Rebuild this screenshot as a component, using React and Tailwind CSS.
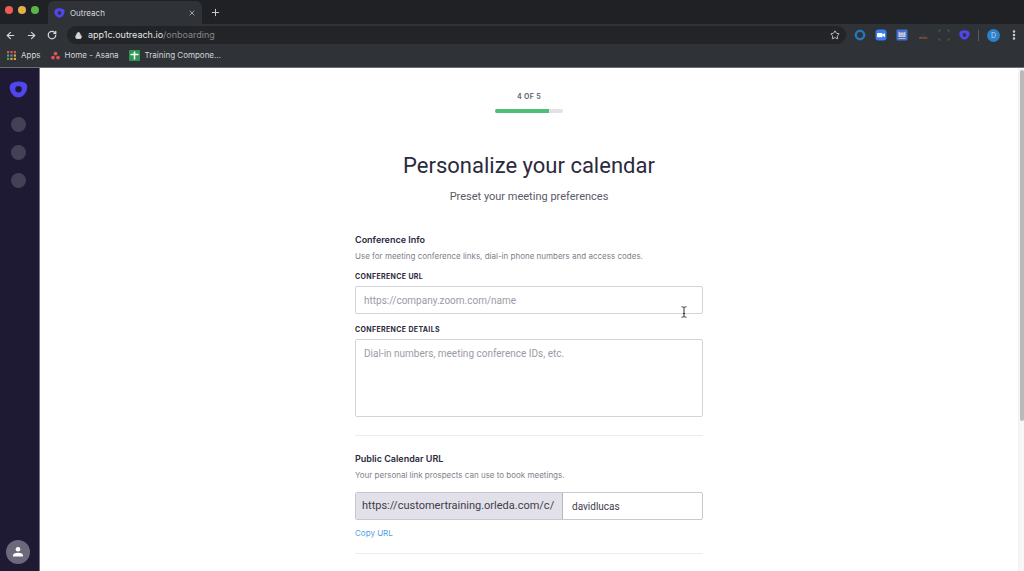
import React, { useState } from 'react'
import { ArrowLeft, ArrowRight, RotateCw, Lock, Star, X, Plus, EllipsisVertical } from 'lucide-react'

// Outreach mark: rounded blob with a round hole
const OutreachLogo = ({ className }) => (
    <svg viewBox="0 0 20 18" className={className} aria-hidden="true">
        <path
            fill="#5046f0"
            fillRule="evenodd"
            d="M5 1.300C8.500 .2 13 .4 16.200 1.500C18.800 2.400 19.600 4.800 19.200 7.300C18.700 10.600 17.200 13.200 15 15.300C12.600 17.600 8.800 17.900 5.800 16.300C3 14.700 1.300 11.300 .7 7.800C.2 4.600 1.800 2.300 5 1.300ZM10 5.400A3.400 3.400 0 1 0 10 12.200A3.400 3.400 0 1 0 10 5.400Z"
        />
    </svg>
)

const AppsIcon = () => {
    const colors = ['#d9574c', '#d9574c', '#d9574c', '#4fa765', '#4a86e0', '#d9a441', '#4fa765', '#d9a441', '#d9a441']
    return (
        <svg viewBox="0 0 9 9" className="size-[9px]" aria-hidden="true">
            {colors.map((color, i) => (
                <rect key={i} x={(i % 3) * 3.4} y={Math.floor(i / 3) * 3.4} width="2.200" height="2.200" fill={color} />
            ))}
        </svg>
    )
}

const AsanaIcon = () => (
    <svg viewBox="0 0 10 10" className="size-[9px]" fill="#e0525a" aria-hidden="true">
        <circle cx="5" cy="2.800" r="2.100" />
        <circle cx="2.200" cy="7.300" r="2.100" />
        <circle cx="7.800" cy="7.300" r="2.100" />
    </svg>
)

const SheetIcon = () => (
    <svg viewBox="0 0 11 11" className="size-[11px]" aria-hidden="true">
        <rect width="11" height="11" rx="1" fill="#2f9553" />
        <path d="M5.500 1.500V9.500M1.500 4.500H9.500" stroke="#fff" strokeWidth="1.500" />
    </svg>
)

const bookmarks = [
    { label: 'Apps', icon: AppsIcon },
    { label: 'Home - Asana', icon: AsanaIcon },
    { label: 'Training Compone…', icon: SheetIcon },
]

const extensions = [
    {
        name: 'Okta',
        art: <circle cx="6" cy="6" r="4.200" fill="none" stroke="#2577b5" strokeWidth="2.400" />,
    },
    {
        name: 'Zoom',
        art: (
            <>
                <rect x=".5" y=".5" width="11" height="11" rx="3" fill="#3b7df0" />
                <rect x="2" y="4" width="5.500" height="4.200" rx="1" fill="#fff" />
                <path d="M7.500 5.200L10 4.200V8L7.500 7Z" fill="#fff" />
            </>
        ),
    },
    {
        name: 'Reader',
        art: (
            <>
                <rect x=".5" y=".5" width="11" height="11" rx="1" fill="#3f6fd0" />
                <path d="M2.500 2.500L4 3.500H8L9.500 2.500V8H2.500Z" fill="#c9ccd6" />
                <path d="M4 5H5M7 5H8M4.500 6.700H7.500" stroke="#8d94a8" strokeWidth=".8" />
                <path d="M2.500 9.500H9.500" stroke="#c9ccd6" strokeWidth=".8" />
            </>
        ),
    },
    {
        name: 'Analytics',
        art: (
            <>
                <path d="M2 9H10.500" stroke="#8a563a" strokeWidth="1.200" />
                <path d="M3.500 8.500L5 7.500M7 8.500L8.500 7.500" stroke="#8a563a" strokeWidth=".8" />
                <path d="M5.500 5.500L7 4.500" stroke="#3b4252" strokeWidth="1" />
            </>
        ),
    },
    {
        name: 'Capture',
        art: (
            <path
                d="M1 3V1H3M9 1H11V3M11 9V11H9M3 11H1V9"
                fill="none"
                stroke="#3d6b3a"
                strokeWidth=".9"
            />
        ),
    },
]

const BrowserChrome = () => (
    <header className="flex-shrink-0 bg-[#202124] text-[#d5d7da]">
        {/* Tab strip */}
        <div className="flex h-6 items-stretch">
            <div className="flex w-12 items-center gap-[5px] pb-1 pl-[5px]">
                <span className="size-2 rounded-full bg-[#ee5c54]" />
                <span className="size-2 rounded-full bg-[#e0b04a]" />
                <span className="size-2 rounded-full bg-[#5bb548]" />
            </div>
            <div className="mt-px flex w-[154px] items-center rounded-t-md bg-[#2f3236] px-1.5">
                <OutreachLogo className="h-[10px] w-[11px]" />
                <span className="ml-[5px] flex-1 text-[8px]">Outreach</span>
                <button aria-label="Close tab"><X size={8} /></button>
            </div>
            <button aria-label="New tab" className="ml-2 self-center"><Plus size={11} /></button>
        </div>

        {/* Toolbar */}
        <div className="flex h-[22px] items-center bg-[#2f3236] pr-1">
            <div className="flex items-center gap-2.5 pr-2.5 pl-[5px]">
                <button aria-label="Back"><ArrowLeft size={11} strokeWidth={2.5} /></button>
                <button aria-label="Forward"><ArrowRight size={11} strokeWidth={2.5} /></button>
                <button aria-label="Reload"><RotateCw size={10} strokeWidth={3} /></button>
            </div>
            <div className="flex h-[18px] flex-1 items-center rounded-full bg-[#222427] pr-1.5 pl-2">
                <Lock size={7} strokeWidth={3} fill="currentColor" />
                <span className="ml-1.5 flex-1 text-[9px] text-[#e4e6e8]">
                    app1c.outreach.io<span className="text-[#85888c]">/onboarding</span>
                </span>
                <button aria-label="Bookmark this page"><Star size={10} /></button>
            </div>
            <div className="ml-2 flex items-center gap-[9px]">
                {extensions.map((ext) => (
                    <button key={ext.name} aria-label={ext.name}>
                        <svg viewBox="0 0 12 12" className="size-3">{ext.art}</svg>
                    </button>
                ))}
                <button aria-label="Outreach Everywhere"><OutreachLogo className="h-[10px] w-[11px]" /></button>
            </div>
            <span className="ml-2 h-[11px] w-px bg-[#55585c]" />
            <button className="ml-2 size-[13px] rounded-full bg-[#2d7fc8] text-[7px] leading-none text-[#b9dcf7]">D</button>
            <button aria-label="Browser menu" className="ml-2"><EllipsisVertical size={12} strokeWidth={3} /></button>
        </div>

        {/* Bookmarks */}
        <nav className="flex h-[22px] items-center gap-2.5 border-b border-[#6c6e71] bg-[#2f3236] pb-[3px] pl-[7px] text-[8px]">
            {bookmarks.map((item) => (
                <a key={item.label} href="#" className="flex items-center gap-[5px]">
                    <item.icon />
                    <span>{item.label}</span>
                </a>
            ))}
        </nav>
    </header>
)

const Sidebar = () => (
    <aside className="flex w-10 flex-shrink-0 flex-col items-center border-r border-[#77757f] bg-[#1e1a34] pt-[13px] pr-[3px] pb-[7px]">
        <a href="#" aria-label="Home"><OutreachLogo className="h-[17px] w-[19px]" /></a>
        <div className="mt-[19px] flex flex-col gap-[13px]">
            <span className="size-[15px] rounded-full bg-[#454056]" />
            <span className="size-[15px] rounded-full bg-[#454056]" />
            <span className="size-[15px] rounded-full bg-[#454056]" />
        </div>
        <button aria-label="Account" className="mt-auto flex size-6 items-center justify-center rounded-full bg-[#6d697c]">
            <svg viewBox="0 0 12 12" className="size-3" fill="#fff">
                <circle cx="6" cy="3.300" r="2.300" />
                <path d="M1 10.500V9.500C1 7.800 3 6.800 6 6.800S11 7.800 11 9.500V10.500Z" />
            </svg>
        </button>
    </aside>
)

const SectionTitle = ({ title, children }) => (
    <>
        <h2 className="text-[9px] leading-4 font-semibold text-[#2b2a3d]">{title}</h2>
        <p className="mt-0.5 text-[8px] leading-3 text-[#7f7f8b]">{children}</p>
    </>
)

const App = () => {
    const [conferenceUrl, setConferenceUrl] = useState('')
    const [details, setDetails] = useState('')
    const [slug, setSlug] = useState('davidlucas')

    return (
        <div className="flex h-dvh flex-col overflow-hidden bg-white font-[Inter,'Open_Sans',sans-serif]">
            <BrowserChrome />
            <div className="flex min-h-0 flex-1">
                <Sidebar />
                <main className="min-w-0 flex-1 overflow-hidden">
                    <div className="mx-auto w-full max-w-[348px] pt-[23px]">
                        {/* Step progress */}
                        <div className="flex flex-col items-center">
                            <p className="text-[7px] leading-3 font-bold tracking-wider text-[#6c6b79]">4 OF 5</p>
                            <div className="mt-1.5 h-1 w-[68px] overflow-hidden rounded-full bg-[#e2e1e8]">
                                <div className="h-full w-4/5 bg-[#4fbf78]" />
                            </div>
                        </div>

                        <h1 className="mt-[37px] text-center font-[Roboto,sans-serif] text-[22px] leading-8 text-[#2b2a3d]">
                            Personalize your calendar
                        </h1>
                        <p className="mt-[7px] text-center font-[Roboto,sans-serif] text-[11px] leading-4 text-[#5a5968]">
                            Preset your meeting preferences
                        </p>

                        <section className="mt-[27px]">
                            <SectionTitle title="Conference Info">
                                Use for meeting conference links, dial-in phone numbers and access codes.
                            </SectionTitle>
                            <label htmlFor="conference-url" className="mt-[9px] block text-[7px] leading-3 font-bold tracking-wider text-[#2b2a3d]">
                                CONFERENCE URL
                            </label>
                            <input
                                id="conference-url"
                                type="text"
                                value={conferenceUrl}
                                onChange={(e) => setConferenceUrl(e.target.value)}
                                placeholder="https://company.zoom.com/name"
                                className="mt-[3px] block h-7 w-full rounded-xs border border-[#d3d3da] px-2 font-[Roboto,sans-serif] text-[10px] text-[#3d3c4c] placeholder:text-[#9b9ba6]"
                            />
                            <label htmlFor="conference-details" className="mt-2.5 block text-[7px] leading-3 font-bold tracking-wider text-[#2b2a3d]">
                                CONFERENCE DETAILS
                            </label>
                            <textarea
                                id="conference-details"
                                value={details}
                                onChange={(e) => setDetails(e.target.value)}
                                placeholder="Dial-in numbers, meeting conference IDs, etc."
                                className="mt-[3px] block h-[78px] w-full resize-none rounded-xs border border-[#d3d3da] px-2 py-1.5 font-[Roboto,sans-serif] text-[10px] leading-4 text-[#3d3c4c] placeholder:text-[#9b9ba6]"
                            />
                        </section>

                        <hr className="mt-[18px] border-[#ececef]" />

                        <section className="mt-[15px]">
                            <SectionTitle title="Public Calendar URL">
                                Your personal link prospects can use to book meetings.
                            </SectionTitle>
                            <div className="mt-[11px] flex h-7 rounded-xs border border-[#c9c8d2] font-[Roboto,sans-serif] text-[#3d3c4c]">
                                <label
                                    htmlFor="calendar-slug"
                                    className="flex w-[207px] flex-shrink-0 items-center border-r border-[#b5b4c0] bg-[#e2e1e9] pl-1.5 text-[11px]"
                                >
                                    https://customertraining.orleda.com/c/
                                </label>
                                <input
                                    id="calendar-slug"
                                    type="text"
                                    value={slug}
                                    onChange={(e) => setSlug(e.target.value)}
                                    className="min-w-0 flex-1 px-[9px] text-[10px]"
                                />
                            </div>
                            <button className="mt-[7px] block text-[8px] leading-3 text-[#4f9fe0]">Copy URL</button>
                        </section>

                        <hr className="mt-3.5 border-[#ececef]" />
                    </div>
                </main>

                {/* Scrollbar */}
                <div className="w-1.5 flex-shrink-0 border-l border-[#f2f2f2] bg-[#f6f6f6] pt-0.5 pl-px">
                    <div className="h-[70%] w-full rounded-full bg-[#b9b9b9]" />
                </div>
            </div>

            {/* Text cursor hovering over the URL field */}
            <svg viewBox="0 0 6 12" className="pointer-events-none absolute top-[306px] left-[681px] h-3 w-1.5" aria-hidden="true">
                <path d="M.5 .8C2 .8 3 1 3 2V10C3 11 2 11.200 .5 11.200M5.500 .8C4 .8 3 1 3 2M3 10C3 11 4 11.200 5.500 11.200M2 7.500H4" fill="none" stroke="#333" strokeWidth="1" />
            </svg>
        </div>
    )
}

export default App
